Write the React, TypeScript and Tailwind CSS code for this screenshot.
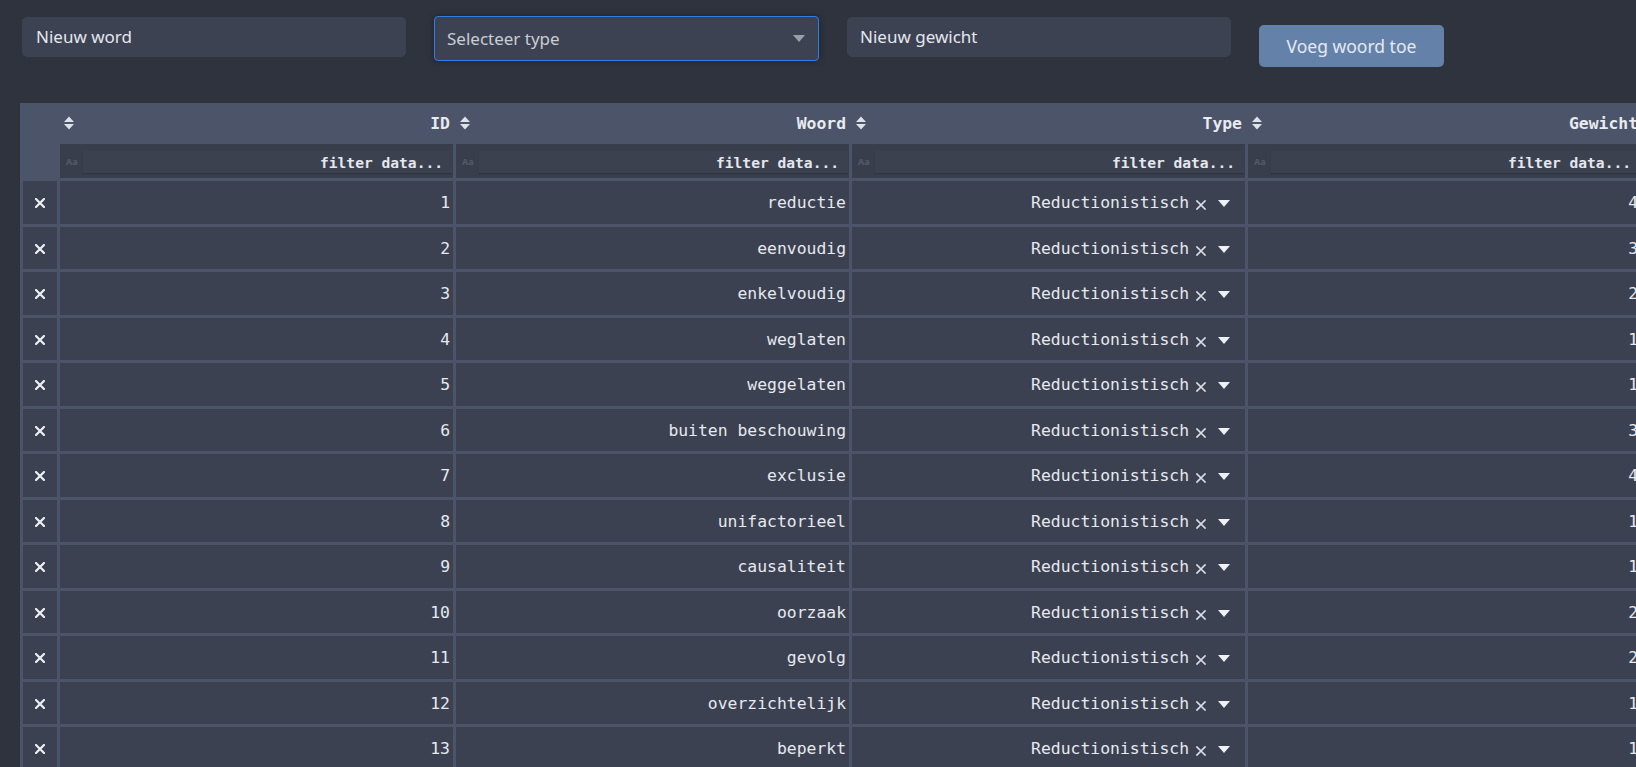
import React from 'react'

// Woordenlijst beheer - dark theme table met filters

const rows: { id: number; woord: string; gewicht: number }[] = [
  { id: 1, woord: 'reductie', gewicht: 4 },
  { id: 2, woord: 'eenvoudig', gewicht: 3 },
  { id: 3, woord: 'enkelvoudig', gewicht: 2 },
  { id: 4, woord: 'weglaten', gewicht: 1 },
  { id: 5, woord: 'weggelaten', gewicht: 1 },
  { id: 6, woord: 'buiten beschouwing', gewicht: 3 },
  { id: 7, woord: 'exclusie', gewicht: 4 },
  { id: 8, woord: 'unifactorieel', gewicht: 1 },
  { id: 9, woord: 'causaliteit', gewicht: 1 },
  { id: 10, woord: 'oorzaak', gewicht: 2 },
  { id: 11, woord: 'gevolg', gewicht: 2 },
  { id: 12, woord: 'overzichtelijk', gewicht: 1 },
  { id: 13, woord: 'beperkt', gewicht: 1 },
]

const columns = ['', 'ID', 'Woord', 'Type', 'Gewicht']

const mono = "font-['DejaVu_Sans_Mono','Liberation_Mono',monospace]"
const sans = "font-['Noto_Sans','Open_Sans',sans-serif]"
const grid = 'grid grid-cols-[34px_393px_393px_393px_393px] gap-x-[3px]'

function SortIcon() {
  return (
    <svg width="10" height="14" viewBox="0 0 10 14" className="text-[#dde1e8]">
      <polygon points="0,6 5,0.5 10,6" fill="currentColor" />
      <polygon points="0,8 5,13.5 10,8" fill="currentColor" />
    </svg>
  )
}

function Caret({ className }: { className?: string }) {
  return (
    <svg width="12" height="7" viewBox="0 0 12 7" className={className}>
      <polygon points="0,0 12,0 6,7" fill="currentColor" />
    </svg>
  )
}

function Cross({ size, stroke, className }: { size: number; stroke: number; className?: string }) {
  return (
    <svg width={size} height={size} viewBox="0 0 10 10" className={className}>
      <path d="M1 1 L9 9 M9 1 L1 9" stroke="currentColor" strokeWidth={stroke} strokeLinecap="square" />
    </svg>
  )
}

export default function App() {
  return (
    <div className={`h-screen w-full overflow-hidden bg-[#2f333e] ${sans}`}>
      {/* Toevoegen */}
      <div className="flex items-start gap-[28px] pl-[22px] pt-[17px]">
        <div className="flex h-[40px] w-[384px] items-center rounded-[5px] bg-[#3d4252] pl-[14px] text-[17px] text-[#e3e7ee]">
          Nieuw word
        </div>
        <div className="-mt-[1px] flex h-[45px] w-[385px] items-center justify-between rounded-[4px] border border-[#2f7fea] bg-[#3d4252] pl-[12px] pr-[13px] text-[17px] text-[#c9cdd5] shadow-[0_0_6px_rgba(0,0,0,0.35)]">
          <span>Selecteer type</span>
          <Caret className="text-[#9b9ea6]" />
        </div>
        <div className="flex h-[40px] w-[384px] items-center rounded-[5px] bg-[#3d4252] pl-[13px] text-[17px] text-[#e3e7ee]">
          Nieuw gewicht
        </div>
        <button className="mt-[8px] h-[42px] w-[185px] rounded-[5px] bg-[#6482a9] text-[17.5px] text-[#e4e9f1]">
          Voeg woord toe
        </button>
      </div>

      {/* Tabel */}
      <div className={`ml-[20px] mt-[36px] w-max bg-[#4b5468] pl-[3px] ${mono}`}>
        <div className={`${grid} h-[41px]`}>
          {columns.map((c, i) => (
            <div key={i} className="relative flex items-center justify-end pr-[3px] pt-[2px] text-[16.4px] font-bold text-[#e8ebf0]">
              {c}
              <span className="absolute left-full top-[13px] ml-[7px]">
                <SortIcon />
              </span>
            </div>
          ))}
        </div>
        <div className={`${grid} h-[34px]`}>
          <div />
          {columns.slice(1).map((c) => (
            <div key={c} className="relative flex items-center bg-[#393e4c]">
              <span className={`absolute left-[6px] top-[11px] text-[9px] font-bold text-[#545a6a] ${sans}`}>Aa</span>
              <div className="ml-[23px] mr-[1px] mt-[2px] flex h-[22px] flex-1 items-center justify-end bg-[#3c4150] pr-[9px] pt-[1px] text-[14.6px] font-bold text-[#e4e7ed] shadow-[0_1px_1px_rgba(0,0,0,0.15)]">
                filter data...
              </div>
            </div>
          ))}
        </div>
        {rows.map((r) => (
          <div key={r.id} className={`${grid} mt-[3px] h-[42.5px] text-[16.4px] text-[#e6e9ef]`}>
            <div className="flex items-center justify-center bg-[#3c4151] pt-[2px]">
              <Cross size={10} stroke={2.2} className="text-[#eef0f4]" />
            </div>
            <div className="flex items-center justify-end bg-[#3c4151] pr-[3px] pt-[3px]">{r.id}</div>
            <div className="flex items-center justify-end bg-[#3c4151] pr-[3px] pt-[3px]">{r.woord}</div>
            <div className="flex items-center justify-end bg-[#3c4151] pr-[15px] pt-[3px]">
              <span>Reductionistisch</span>
              <Cross size={10} stroke={1.7} className="ml-[7px] mt-[3px] text-[#d9dde4]" />
              <Caret className="ml-[12px] text-[#eef0f4]" />
            </div>
            <div className="flex items-center justify-end bg-[#3c4151] pr-[3px] pt-[3px]">{r.gewicht}</div>
          </div>
        ))}
      </div>
    </div>
  )
}
